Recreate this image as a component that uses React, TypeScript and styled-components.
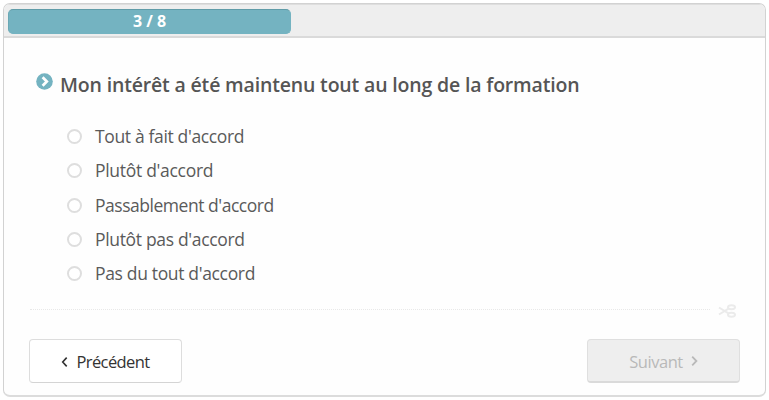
import React from "react";
import styled, { createGlobalStyle, css } from "styled-components";

const GlobalStyle = createGlobalStyle`
  * { box-sizing: border-box; }
  body {
    margin: 0;
    background: #fff;
    color: #555;
    font-family: "Open Sans", "Noto Sans", sans-serif;
  }
`;

const Card = styled.main`
  display: flex;
  flex-direction: column;
  width: 763px;
  height: 394px;
  margin: 3px;
  border: 1px solid #d2d2d2;
  border-bottom: 2px solid #dcdcdc;
  border-radius: 7px;
  background: #fefefe;
  overflow: hidden;
`;

const ProgressTrack = styled.div`
  flex: none;
  height: 34px;
  padding: 4px 4px 5px;
  border-top: 1px solid #dedede;
  border-bottom: 2px solid #dadada;
  background: #eee;
`;

const ProgressBar = styled.div`
  display: flex;
  align-items: center;
  justify-content: center;
  width: 283px;
  height: 25px;
  border: 1px solid #74b3c1;
  border-top-color: #609ca8;
  border-left-color: #6aa8b5;
  border-radius: 5px;
  background: #74b3c1;
  color: #fff;
  font-size: 16px;
  font-weight: 700;
  line-height: 22px;
  padding-bottom: 1px;
`;

const Body = styled.section`
  height: 263px;
  padding: 32px 31px 0 32px;
`;

const QuestionRow = styled.div`
  display: flex;
  align-items: flex-start;
  height: 49px;
`;

const QuestionIcon = styled.svg`
  flex: none;
  width: 17px;
  height: 17px;
  margin: 3px 7px 0 0;
`;

const Question = styled.h1`
  margin: 0;
  font-size: 19.5px;
  font-weight: 600;
  line-height: 29px;
  letter-spacing: -0.17px;
  white-space: nowrap;
`;

const Options = styled.div`
  display: grid;
  grid-auto-rows: 34.25px;
  padding-left: 31px;
`;

const Option = styled.label<{ $spacing: number }>`
  display: flex;
  align-items: center;
  gap: 13px;
  color: #5a5a5a;
  font-size: 17.5px;
  line-height: 34px;
  letter-spacing: ${(p) => p.$spacing}px;
  white-space: nowrap;
`;

const Radio = styled.input`
  appearance: none;
  flex: none;
  width: 15px;
  height: 15px;
  margin: 1px 0 0;
  border: 2px solid #dedede;
  border-radius: 50%;
  background: #fff;
`;

const CutLine = styled.div`
  display: flex;
  align-items: center;
  height: 18px;
  padding: 0 28px 0 26px;
`;

const Dashes = styled.div`
  flex: 1;
  margin: 0 7px 1px 0;
  border-top: 1px dotted #e8e8e8;
`;

const Scissors = styled.svg`
  width: 20px;
  height: 14px;
  margin-top: 1px;
`;

const Footer = styled.footer`
  display: flex;
  justify-content: space-between;
  padding: 20px 25px 0;
`;

const NavButton = styled.button<{ $muted?: boolean }>`
  display: flex;
  align-items: center;
  justify-content: center;
  gap: 8px;
  width: 153px;
  height: 44px;
  padding: 1px 0 0;
  border: 1px solid #ddd;
  border-bottom-color: #d4d4d4;
  border-radius: 4px;
  background: #fff;
  color: #333;
  font: 400 16.5px "Open Sans", "Noto Sans", sans-serif;
  letter-spacing: -0.6px;
  ${(p) =>
    p.$muted &&
    css`
      border-color: #dfdfdf;
      border-bottom: 2px solid #dadada;
      background: #eee;
      color: #b9b9b9;
      letter-spacing: -0.45px;
    `}
`;

const Chevron = styled.svg`
  width: 7px;
  height: 12px;
`;

const choices = [
  { text: "Tout à fait d'accord", spacing: -0.35 },
  { text: "Plutôt d'accord", spacing: -0.3 },
  { text: "Passablement d'accord", spacing: -0.47 },
  { text: "Plutôt pas d'accord", spacing: -0.33 },
  { text: "Pas du tout d'accord", spacing: -0.34 },
];

export default function App() {
  return (
    <>
      <GlobalStyle />
      <Card>
        <ProgressTrack>
          <ProgressBar>3 / 8</ProgressBar>
        </ProgressTrack>
        <Body>
          <QuestionRow>
            <QuestionIcon viewBox="0 0 17 17">
              <circle cx="8.5" cy="8.5" r="8.3" fill="#74b3c1" />
              <path d="M6.6 4.3 10.8 8.5 6.6 12.7" fill="none" stroke="#fff" strokeWidth="2.7" />
            </QuestionIcon>
            <Question>Mon intérêt a été maintenu tout au long de la formation</Question>
          </QuestionRow>
          <Options>
            {choices.map((c) => (
              <Option key={c.text} $spacing={c.spacing}>
                <Radio type="radio" name="interest" />
                {c.text}
              </Option>
            ))}
          </Options>
        </Body>
        <CutLine>
          <Dashes />
          <Scissors viewBox="0 0 20 14" fill="none" stroke="#ebebeb" strokeWidth="2">
            <ellipse cx="14.5" cy="3.3" rx="3.5" ry="2" />
            <ellipse cx="14.5" cy="10.7" rx="3.5" ry="2" />
            <path d="M11.5 4.7 2 10.5M11.5 9.3 2 3.5" />
          </Scissors>
        </CutLine>
        <Footer>
          <NavButton>
            <Chevron viewBox="0 0 7 12" fill="none" stroke="currentColor" strokeWidth="1.6">
              <path d="M5.7 1.6 1.7 6 5.7 10.4" />
            </Chevron>
            Précédent
          </NavButton>
          <NavButton $muted disabled>
            Suivant
            <Chevron viewBox="0 0 7 12" fill="none" stroke="currentColor" strokeWidth="1.8">
              <path d="M1.2 1.7 5.4 6 1.2 10.3" />
            </Chevron>
          </NavButton>
        </Footer>
      </Card>
    </>
  );
}
